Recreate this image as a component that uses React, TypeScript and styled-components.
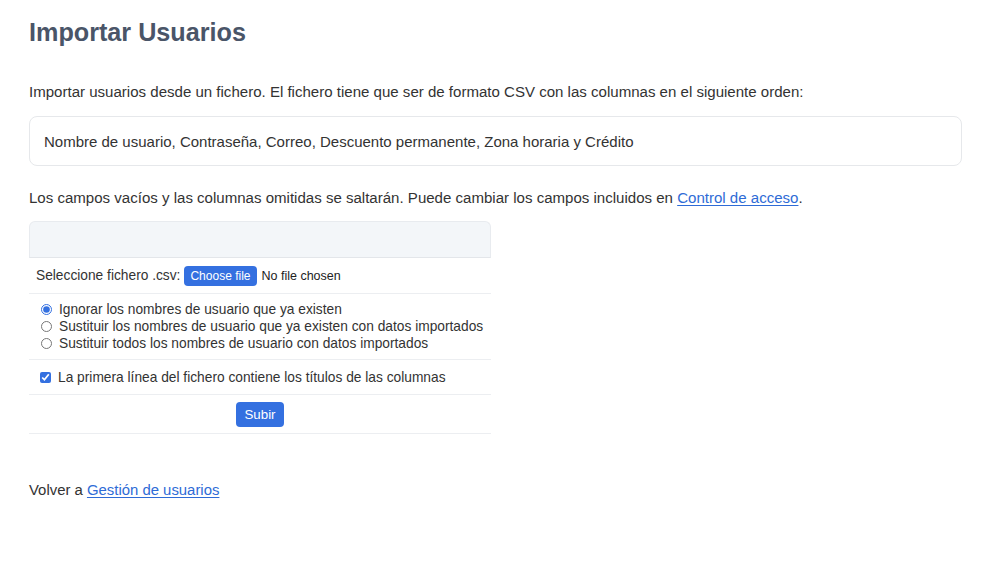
import React from "react";
import styled, { createGlobalStyle } from "styled-components";

const Global = createGlobalStyle`
  html, body { margin: 0; padding: 0; background: #fff; }
  body { font-family: "Liberation Sans", Arial, Helvetica, sans-serif; color: #333; }
  * { box-sizing: border-box; }
`;

const Page = styled.div`
  padding: 14px 22px 40px 29px;
`;

const Title = styled.h1`
  margin: 0;
  font-size: 25.2px;
  line-height: 36px;
  font-weight: 700;
  color: #4a5568;
`;

const Para = styled.p<{ $mt: number }>`
  margin: ${(p) => p.$mt}px 0 0;
  font-size: 15.05px;
  line-height: 22px;
  color: #333;
`;

const ColumnsBox = styled.div`
  margin-top: 13px;
  border: 1px solid #e6e8eb;
  border-radius: 8px;
  padding: 0 14px;
  height: 50px;
  display: flex;
  align-items: center;
  font-size: 15px;
  color: #333;
`;

const Link = styled.a`
  color: #2e6bd6;
  text-decoration: underline;
  text-underline-offset: 2px;
  cursor: pointer;
`;

const FormTable = styled.div`
  margin-top: 12px;
  width: 462px;
  font-size: 13.75px;
  color: #333;
`;

const Header = styled.div`
  height: 37px;
  background: #f3f6f9;
  border: 1px solid #e8ebef;
  border-bottom-color: #e3e6ea;
  border-radius: 6px 6px 0 0;
`;

const Row = styled.div<{ $h?: number; $center?: boolean; $py?: number }>`
  display: flex;
  flex-direction: ${(p) => (p.$py ? "column" : "row")};
  align-items: ${(p) => (p.$center ? "center" : p.$py ? "stretch" : "center")};
  justify-content: ${(p) => (p.$center ? "center" : "flex-start")};
  ${(p) => (p.$h ? `height: ${p.$h}px;` : "")}
  ${(p) => (p.$py ? `padding: ${p.$py}px 0;` : "")}
  padding-left: ${(p) => (p.$center ? 0 : 7)}px;
  border-bottom: 1px solid #eceef1;
`;

const FileButton = styled.span`
  display: inline-flex;
  align-items: center;
  height: 20px;
  padding: 0 6px;
  margin: 0 5px 0 4px;
  background: #3470e0;
  color: #fff;
  border-radius: 4px;
  font-size: 12px;
`;

const FileStatus = styled.span`
  font-size: 12.5px;
  color: #222;
`;

const OptionLine = styled.label<{ $indent?: number }>`
  display: flex;
  align-items: center;
  height: 17px;
  padding-left: ${(p) => p.$indent ?? 5}px;
  gap: 7px;
`;

const Radio = styled.input.attrs({ type: "radio" })`
  margin: 0;
  width: 11px;
  height: 11px;
  accent-color: #3470e0;
`;

const Check = styled.input.attrs({ type: "checkbox" })`
  margin: 0 0 0 4px;
  width: 11px;
  height: 11px;
  accent-color: #3470e0;
`;

const Submit = styled.button`
  height: 25px;
  padding: 0 8px;
  background: #3470e0;
  color: #fff;
  border: none;
  border-radius: 4px;
  font-family: inherit;
  font-size: 13.3px;
`;

const Footer = styled.p`
  margin: 47px 0 0;
  font-size: 14.9px;
  line-height: 18px;
  color: #333;
`;

export default function App() {
  return (
    <>
      <Global />
      <Page>
        <Title>Importar Usuarios</Title>
        <Para $mt={31}>
          Importar usuarios desde un fichero. El fichero tiene que ser de formato CSV con las columnas en el siguiente orden:
        </Para>
        <ColumnsBox>
          Nombre de usuario, Contraseña, Correo, Descuento permanente, Zona horaria y Crédito
        </ColumnsBox>
        <Para $mt={21}>
          Los campos vacíos y las columnas omitidas se saltarán. Puede cambiar los campos incluidos en{" "}
          <Link>Control de acceso</Link>.
        </Para>
        <FormTable>
          <Header />
          <Row $h={36}>
            Seleccione fichero .csv:
            <FileButton>Choose file</FileButton>
            <FileStatus>No file chosen</FileStatus>
          </Row>
          <Row $py={7}>
            <OptionLine>
              <Radio name="mode" defaultChecked />
              Ignorar los nombres de usuario que ya existen
            </OptionLine>
            <OptionLine>
              <Radio name="mode" />
              Sustituir los nombres de usuario que ya existen con datos importados
            </OptionLine>
            <OptionLine>
              <Radio name="mode" />
              Sustituir todos los nombres de usuario con datos importados
            </OptionLine>
          </Row>
          <Row $h={35}>
            <OptionLine $indent={0}>
              <Check defaultChecked />
              La primera línea del fichero contiene los títulos de las columnas
            </OptionLine>
          </Row>
          <Row $h={39} $center>
            <Submit>Subir</Submit>
          </Row>
        </FormTable>
        <Footer>
          Volver a <Link>Gestión de usuarios</Link>
        </Footer>
      </Page>
    </>
  );
}
